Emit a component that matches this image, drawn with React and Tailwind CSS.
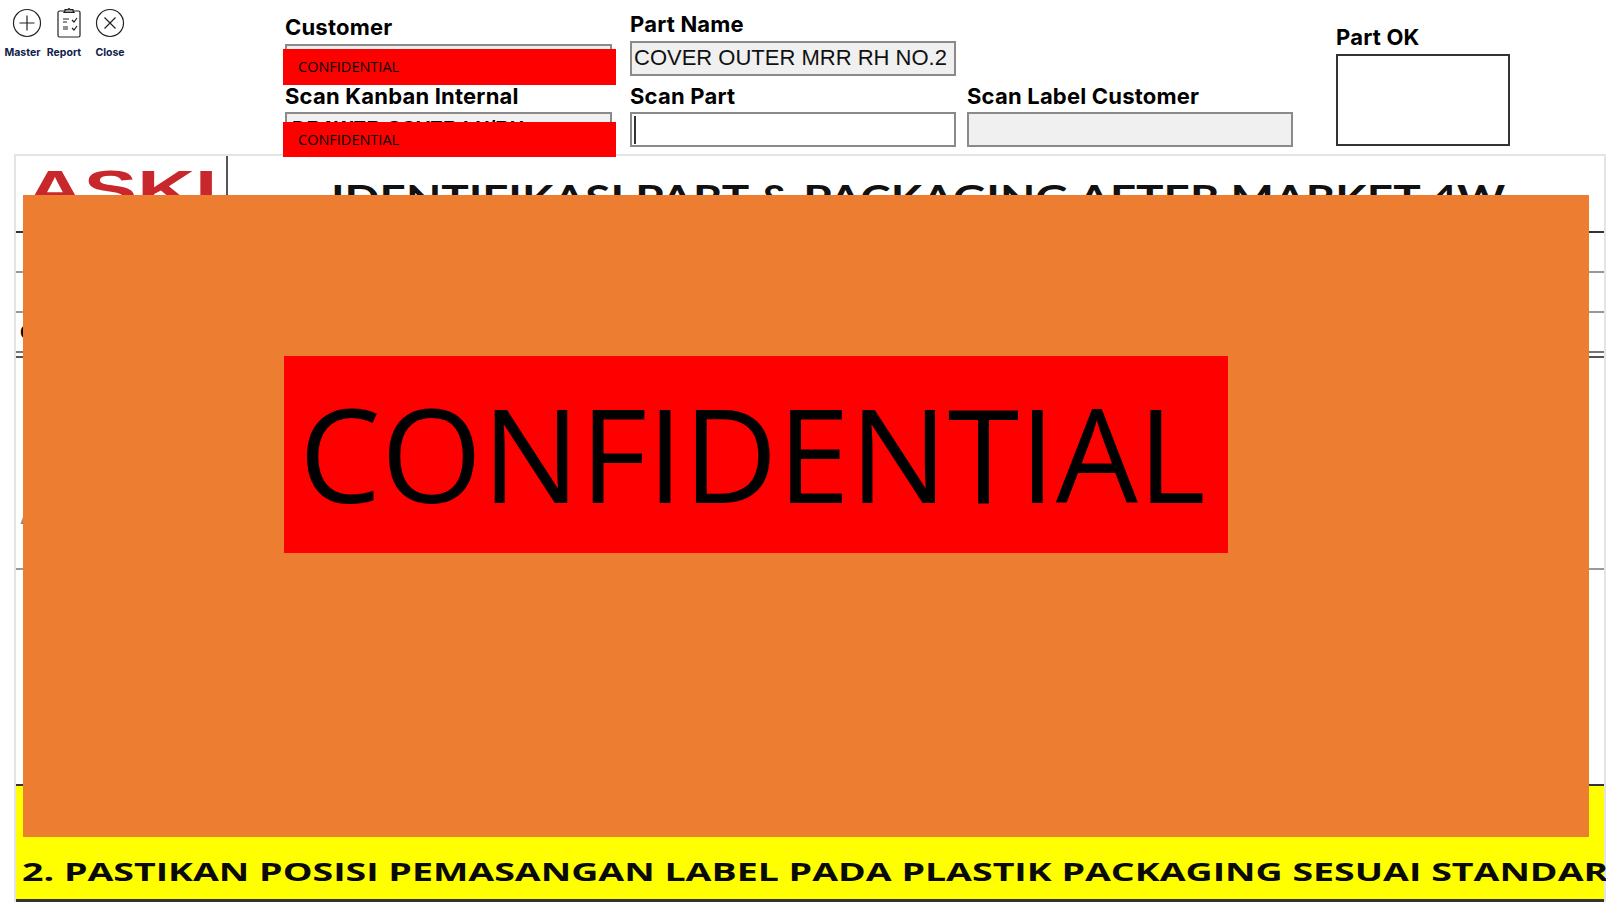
const labelClass = "-mt-[1px] mb-[1px] text-[22px] leading-[26px] font-bold tracking-[0.2px] text-black font-['Inter','Liberation_Sans',sans-serif]";
const inputClass = "h-[35px] border-2 border-[#8a8a8a] font-['Liberation_Sans',sans-serif]";

function MasterIcon() {
  return (
    <svg width="30" height="30" viewBox="0 0 30 30" fill="none" stroke="#222" strokeWidth="1.2">
      <circle cx="15" cy="15" r="13.5" />
      <path d="M15 7.5v15M7.5 15h15" />
    </svg>
  );
}

function ReportIcon() {
  return (
    <svg width="30" height="30" viewBox="0 0 30 30" fill="none" stroke="#222" strokeWidth="1.2">
      <rect x="4" y="3" width="22" height="26" rx="1.5" />
      <path d="M11 3V1.5h3L15 0.5l1 1h3V3l1 1.5H10z" fill="#999" />
      <path d="M9 11h6M9 14h4M9 19h5M9 21h5" />
      <path d="M18 12l2 2 3-4M18 20l2 2 3-4" />
    </svg>
  );
}

function CloseIcon() {
  return (
    <svg width="30" height="30" viewBox="0 0 30 30" fill="none" stroke="#222" strokeWidth="1.2">
      <circle cx="15" cy="15" r="13.5" />
      <path d="M9.5 9.5l11 11M20.5 9.5l-11 11" />
    </svg>
  );
}

function ToolButton({ icon, label, width }) {
  return (
    <div className={`flex flex-col items-center ${width}`}>
      {icon}
      <span className="mt-[8px] text-[10.5px] leading-[14px] font-bold text-[#10204a] font-['Inter','Liberation_Sans',sans-serif]">
        {label}
      </span>
    </div>
  );
}

function Field({ label, width, children }) {
  return (
    <div className={`flex flex-col ${width}`}>
      <span className={labelClass}>{label}</span>
      {children}
    </div>
  );
}

function Redaction({ className }) {
  return (
    <div className={`absolute left-[283px] flex w-[333px] items-center bg-[#ff0000] pl-[15px] text-[14.5px] text-black font-['Open_Sans','Liberation_Sans',sans-serif] ${className}`}>
      CONFIDENTIAL
    </div>
  );
}

function App() {
  return (
    <div className="relative h-[910px] w-[1606px] overflow-hidden bg-white">
      <header className="flex h-[154px]">
        <div className="flex w-[284px] items-start pl-[4px] pt-[8px]">
          <ToolButton width="w-[37px]" label="Master" icon={<div className="ml-[9px]"><MasterIcon /></div>} />
          <ToolButton width="w-[34px] ml-[6px]" label="Report" icon={<div className="ml-[9px]"><ReportIcon /></div>} />
          <ToolButton width="w-[30px] ml-[14px]" label="Close" icon={<CloseIcon />} />
        </div>

        <div className="flex w-[346px] flex-col pl-[1px]">
          <Field label="Customer" width="w-[327px] pt-[15px]">
            <div className={`${inputClass} mt-[3px] bg-[#f0f0f0]`} />
          </Field>
          <Field label="Scan Kanban Internal" width="w-[327px] pt-[5px]">
            <div className={`${inputClass} mt-[2px] bg-[#f0f0f0] px-[5px] text-[20px] leading-[28px] font-bold whitespace-nowrap`}>
              DRAWER COVER LH/RH
            </div>
          </Field>
        </div>

        <div className="flex w-[337px] flex-col">
          <Field label="Part Name" width="w-[326px] pt-[12px]">
            <div className={`${inputClass} mt-[3px] bg-[#f0f0f0] pl-[2px] text-[22px] leading-[30px] whitespace-nowrap text-[#111]`}>
              COVER OUTER MRR RH NO.2
            </div>
          </Field>
          <Field label="Scan Part" width="w-[326px] pt-[8px]">
            <div className={`${inputClass} mt-[2px] flex items-center bg-white pl-[2px]`}>
              <div className="h-[28px] w-[2px] bg-[#333]" />
            </div>
          </Field>
        </div>

        <div className="flex w-[369px] flex-col">
          <Field label="Scan Label Customer" width="w-[326px] pt-[84px]">
            <div className={`${inputClass} mt-[2px] bg-[#f0f0f0]`} />
          </Field>
        </div>

        <Field label="Part OK" width="w-[174px] pt-[25px]">
          <div className="mt-[3px] h-[92px] border-2 border-[#333] bg-white" />
        </Field>
      </header>

      <section className="ml-[14px] flex h-[748px] flex-col border-t-2 border-l-2 border-r-2 border-[#e4e4e4]">
        <div className="flex h-[77px] border-b-2 border-[#333]">
          <div className="h-full w-[212px] overflow-hidden border-r-2 border-[#555] pl-[10px] pt-[8px]">
            <span className="inline-block origin-left scale-x-[1.54] text-[52px] leading-[50px] font-black text-[#c8282c] font-['Liberation_Sans',sans-serif]">
              ASKI
            </span>
          </div>
          <div className="flex-1 pl-[103px] pt-[19px] text-[37px] leading-[44px] font-bold whitespace-nowrap text-[#111] font-['Lato','Liberation_Sans',sans-serif]">
            <span className="inline-block origin-left scale-x-[1.24]">
              IDENTIFIKASI PART &amp; PACKAGING AFTER MARKET 4W
            </span>
          </div>
        </div>
        <div className="h-[40px] border-b-2 border-[#999]" />
        <div className="h-[40px] border-b-2 border-[#999]" />
        <div className="h-[40px] border-b-2 border-[#777] pl-[4px] text-[20px] leading-[38px] font-bold font-['Liberation_Sans',sans-serif]">
          C
        </div>
        <div className="h-[5px] border-b-2 border-[#555]" />
        <div className="flex h-[212px] items-end border-b-2 border-[#999] pb-[36px] pl-[4px] text-[20px] font-bold text-[#888] font-['Liberation_Sans',sans-serif]">
          A
        </div>
        <div className="h-[214px]" />
        <div className="flex flex-1 items-end border-t-2 border-b-3 border-[#333] bg-[#ffff00] pb-[9px] pl-[6px]">
          <span className="inline-block origin-left scale-x-[1.5] text-[25px] leading-[38px] font-bold whitespace-nowrap text-[#0a0a0a] font-['Open_Sans','Liberation_Sans',sans-serif]">
            2. PASTIKAN POSISI PEMASANGAN LABEL PADA PLASTIK PACKAGING SESUAI STANDAR
          </span>
        </div>
      </section>

      <Redaction className="top-[49px] h-[36px]" />
      <Redaction className="top-[122px] h-[35px]" />

      <div className="absolute top-[195px] left-[23px] h-[642px] w-[1566px] bg-[#ed7d31]">
        <div className="mt-[161px] ml-[261px] flex h-[197px] w-[944px] items-center bg-[#ff0000] pb-[3px] pl-[15px] text-[130px] leading-none font-medium text-black font-['Open_Sans','Liberation_Sans',sans-serif]">
          CONFIDENTIAL
        </div>
      </div>
    </div>
  );
}

export default App;
